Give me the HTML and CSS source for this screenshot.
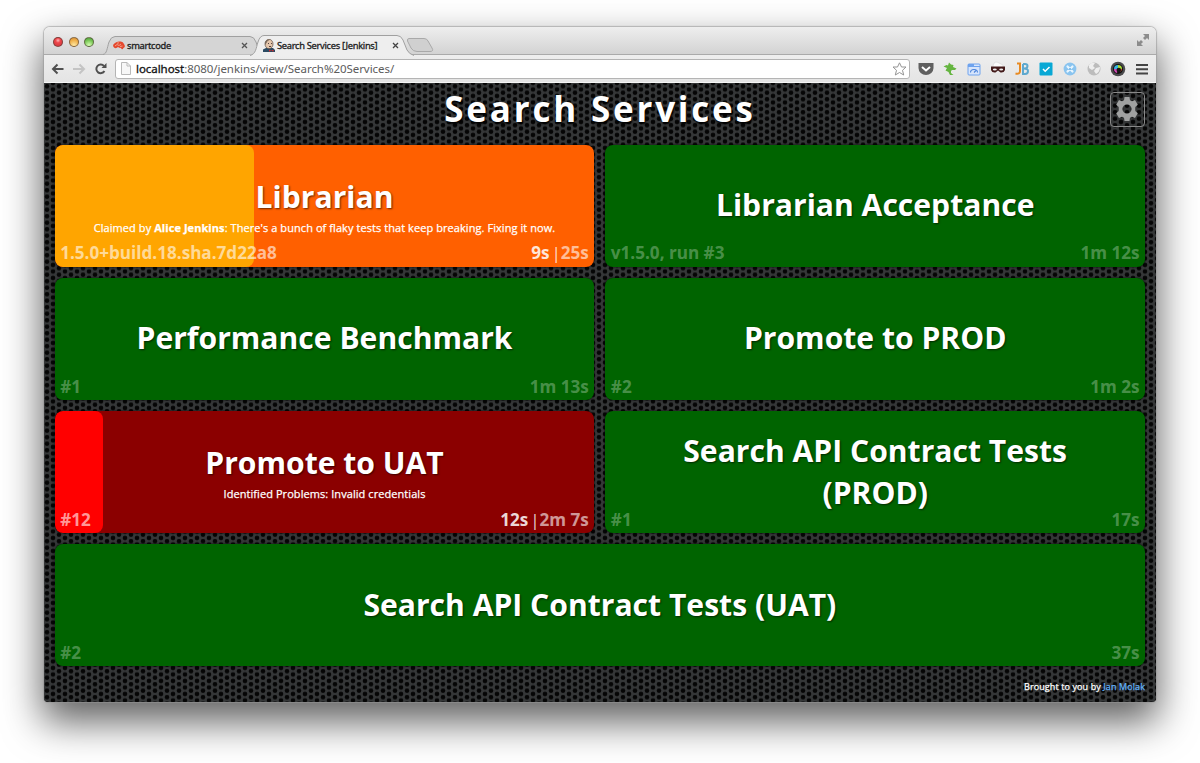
FILE: index.html
```html
<!DOCTYPE html>
<html lang="en">
<head>
<meta charset="utf-8">
<title>Search Services [Jenkins]</title>
<link rel="stylesheet" href="styles.css">
</head>
<body>
<div class="window">
  <div class="chrome">
    <div class="tabstrip">
      <div class="lights"><i class="red"></i><i class="amber"></i><i class="green"></i></div>
      <div class="tabs">
        <svg class="tabshape" width="340" height="22" viewBox="0 0 340 22">
          <path d="M0 20.500C4 20 4 14 6 8Q8 2.500 12 2.500H147Q151 2.500 153 8L156 17Q158 20 162 20.500" fill="#d5d5d5" stroke="#a0a0a0"/>
          <path d="M306 4.500H321Q324 4.500 325 7L329 14Q331 17.500 327 17.500H314Q310 17.500 308 14L304.500 7Q304 4.500 306 4.500Z" fill="#d0d0d0" stroke="#a9a9a9"/>
          <path d="M147 21.500C153 20 153 14 155 8Q157 1.500 161 1.500H294Q298 1.500 300 6L304 16Q306 20 311 21.500" fill="#eee" stroke="#a0a0a0"/>
        </svg>
        <div class="tab first">
          <svg width="12" height="9" viewBox="0 0 12 9"><path d="M0 5Q0 3 2 2Q4 0 7 .500Q10 0 11 3Q13 6 10.500 7Q9 9.500 8 7Q6 7 5 6Q3 8 1 6.500Z" fill="#e5482d"/><path d="M2 5L4 3.500L6 4.500L8 3M4 2.200L6 1.800M7 5.500L9.500 5" stroke="#f7c1ac" stroke-width=".7" fill="none"/></svg>
          <span class="label one">smartcode</span>
          <svg class="close" width="7" height="7"><path d="M1 1L6 6M6 1L1 6" stroke="#555" stroke-width="1.300"/></svg>
        </div>
        <div class="tab second">
          <svg width="12" height="13" viewBox="0 0 12 13"><path d="M0 13V10.500L3 9H10L12 11V13Z" fill="#2b4a62"/><ellipse cx="6" cy="5" rx="4" ry="4.700" fill="#e4c5aa" stroke="#5a4c42" stroke-width=".7"/><path d="M2 6V3Q4 0 7 .700Q4 1.500 3.500 4Z" fill="#7b6a5c"/><path d="M5 4.500H6M8 4.500H9M6 7.500H8" stroke="#544"/><path d="M6 10.500L10.500 12.800V10.500L6 12.800Z" fill="#cc2d2d"/></svg>
          <span class="label two">Search Services [Jenkins]</span>
          <svg class="close" width="7" height="7"><path d="M1 1L6 6M6 1L1 6" stroke="#444" stroke-width="1.300"/></svg>
        </div>
      </div>
      <svg class="expand" width="12" height="12" viewBox="0 0 12 12"><path d="M6 0H12V6L10 4L8 6L6 4L8 2ZM0 6L2 8L4 6L6 8L4 10L6 12H0Z" fill="#8c8c8c"/></svg>
    </div>
    <div class="toolbar">
      <svg class="nav" width="58" height="14" viewBox="0 0 58 14" fill="none" stroke-width="2">
        <path d="M13.500 7H3M7.500 2.500L3 7L7.500 11.500" stroke="#505050"/>
        <path d="M23 7H34M29.500 2.500L34 7L29.500 11.500" stroke="#c4c4c4"/>
        <path d="M54 4.200A4.300 4.300 0 1 0 54.400 9" stroke="#505050"/><path d="M51.500 6H56.500V1Z" fill="#505050"/>
      </svg>
      <div class="address">
        <svg width="10" height="13" viewBox="0 0 10 13"><path d="M.500 .500H6L9.500 4V12.500H.500ZM6 .500V4H9.500" fill="#f7f7f7" stroke="#b9b9b9"/></svg>
        <span class="url"><b>localhost</b>:8080/jenkins/view/Search%20Services/</span>
        <svg class="star" width="15" height="14" viewBox="0 0 15 14"><path d="M7.500 .800L9.500 5H14L10.500 8.300L11.700 13L7.500 10.500L3.300 13L4.500 8.300L1 5H5.500Z" fill="#fff" stroke="#949494"/></svg>
      </div>
      <div class="extensions">
        <svg viewBox="0 0 16 16"><path d="M.500 2H15.500V7A7.500 7 0 0 1 .500 7Z" fill="#606060"/><path d="M4 6L8 9.500L12 6" stroke="#fff" stroke-width="2" fill="none"/></svg>
        <svg viewBox="0 0 16 16"><path d="M1.500 5.500L4.500 4L6 4.500L7 1.500L9 3.500L11.500 4L11 6L14.500 7.500L13 9L10 9L9 10V12L11.500 14H8L6.500 11L3.500 9.500L5 7Z" fill="#65b540"/></svg>
        <svg viewBox="0 0 16 16"><rect x="2" y="3" width="12" height="11" rx="1" fill="#d7e5fc" stroke="#6ea3ee"/><path d="M2 3H8V5H14V6H2Z" fill="#6ea3ee"/><path d="M4.500 11.500A3.500 3 0 0 1 11.500 11.500M8 11.500L10 9.500" stroke="#4b83d9" stroke-width="1.100" fill="none"/></svg>
        <svg viewBox="0 0 16 16"><path d="M3 6Q3 1 7 1L13 4V8H3Z" fill="#fafafa" stroke="#ccc" stroke-width=".5"/><path d="M1 5.500H15V9Q14 12 10.500 11.500L8 9.500L5.500 11.500Q2 12 1 9Z" fill="#421919"/><ellipse cx="4.800" cy="8.500" rx="2" ry="1.100" fill="#eee"/><ellipse cx="11.200" cy="8.500" rx="2" ry="1.100" fill="#eee"/></svg>
        <svg viewBox="0 0 16 16"><path d="M3 2.500H6V10Q6 13.500 1.500 12.500" stroke="#e88a22" stroke-width="2" fill="none"/><path d="M9 3H11Q13.500 3 13.500 5Q13.500 7.500 10 7.500H9M10 7.500Q14 7.500 14 10Q14 13 11 13H9V3" stroke="#5ea9cf" stroke-width="2" fill="none"/></svg>
        <svg viewBox="0 0 16 16"><rect x="1.500" y="1.500" width="13" height="13" rx="1" fill="#08a8d5"/><path d="M5 8L7.200 10.200L11.500 6" stroke="#fff" stroke-width="1.500" fill="none"/></svg>
        <svg viewBox="0 0 16 16"><circle cx="8" cy="8" r="6.400" fill="#8ac4ef"/><path d="M5.500 5.500L10.500 10.500M10.500 5.500L5.500 10.500" stroke="#e8f6ff" stroke-width="2.200" stroke-linecap="round"/><circle cx="8" cy="8" r="1" fill="#65aee5"/></svg>
        <svg viewBox="0 0 16 16"><circle cx="8" cy="8" r="6.500" fill="#bcbcbc"/><path d="M3 4Q5 1 9 2L7 5L9 7L6 9L3 7ZM10 7L14 6Q14 11 10 13L8 10Z" fill="#eee"/></svg>
        <svg viewBox="0 0 16 16"><circle cx="8" cy="8" r="7.300" fill="#4a4a4c"/><circle cx="8" cy="8" r="5" fill="#111"/><path d="M8 4A4 4 0 0 1 12 8H8Z" fill="#a8dd38"/><path d="M4 8A4 4 0 0 1 8 4V8Z" fill="#36b5e4"/><path d="M4 8A4 4 0 0 0 7 12L8 8Z" fill="#d049b5"/><path d="M12 8A4 4 0 0 1 10 11L8 8Z" fill="#e44e36"/><circle cx="8.800" cy="9" r="2.300" fill="#171717"/></svg>
        <svg viewBox="0 0 16 16"><path d="M2 4H14M2 8.300H14M2 12.600H14" stroke="#444" stroke-width="2"/></svg>
      </div>
    </div>
  </div>
  <div class="page">
    <svg class="mesh" width="1112" height="620"><defs><pattern id="mesh" width="12" height="6.500" patternUnits="userSpaceOnUse"><rect width="12" height="7" fill="#353738"/><g fill="#050505"><circle cx="3" cy="3.250" r="2.300"/><circle cx="9" cy="0" r="2.300"/><circle cx="9" cy="6.500" r="2.300"/></g></pattern></defs><rect width="1112" height="620" fill="url(#mesh)"/></svg>
    <header class="heading">
      <h1>Search Services</h1>
      <div class="settings"><svg width="24" height="24" viewBox="0 0 24 24"><path fill-rule="evenodd" d="M9.500 0H14.500L15 3.200L17 4.300L20 3.100L22.800 7.700L20.300 9.900V14L22.800 16.200L20 20.900L17 19.700L15 20.800L14.500 24H9.500L9 20.800L7 19.700L4 20.900L1.200 16.200L3.700 14V9.900L1.200 7.700L4 3.100L7 4.300L9 3.200ZM12 7.500A4.500 4.500 0 1 0 12 16.500A4.500 4.500 0 1 0 12 7.500" fill="#a0a1a1"/></svg></div>
    </header>
    <main class="grid">
      <section class="card claimed">
        <div class="progress amberbar" style="width:37%"></div>
        <div class="body"><h2>Librarian</h2><p>Claimed by <b>Alice Jenkins</b>: There's a bunch of flaky tests that keep breaking. Fixing it now.</p></div>
        <footer class="meta"><span>1.5.0+build.18.sha.7d22a8</span><span class="time"><em>9s</em><i>|</i>25s</span></footer>
      </section>
      <section class="card"><div class="body"><h2>Librarian Acceptance</h2></div><footer class="meta"><span>v1.5.0, run #3</span><span>1m 12s</span></footer></section>
      <section class="card"><div class="body"><h2>Performance Benchmark</h2></div><footer class="meta"><span>#1</span><span>1m 13s</span></footer></section>
      <section class="card"><div class="body"><h2>Promote to PROD</h2></div><footer class="meta"><span>#2</span><span>1m 2s</span></footer></section>
      <section class="card failing">
        <div class="progress redbar" style="width:9%"></div>
        <div class="body"><h2>Promote to UAT</h2><p>Identified Problems: Invalid credentials</p></div>
        <footer class="meta"><span>#12</span><span class="time"><em>12s</em><i>|</i>2m 7s</span></footer>
      </section>
      <section class="card"><div class="body"><h2>Search API Contract Tests<br>(PROD)</h2></div><footer class="meta"><span>#1</span><span>17s</span></footer></section>
      <section class="card wide"><div class="body"><h2>Search API Contract Tests (UAT)</h2></div><footer class="meta"><span>#2</span><span>37s</span></footer></section>
    </main>
    <div class="credit">Brought to you by <a>Jan Molak</a></div>
  </div>
</div>
</body>
</html>
```
FILE: styles.css
```css
* { box-sizing: border-box; }
body { margin: 0; height: 763px; overflow: hidden; background: #fff; padding: 27px 44px 0; font-family: "Open Sans", sans-serif; }
svg { display: block; flex: none; }
.window { width: 1112px; height: 675px; border-radius: 6px 6px 4px 4px; overflow: hidden; display: flex; flex-direction: column; box-shadow: 0 0 1px 1px rgba(150,150,150,.6), 0 18px 38px 2px rgba(0,0,0,.62); }
.chrome { height: 56px; background: linear-gradient(#eee 0, #d2d2d2 28px, #eee 28px, #e4e4e4 100%); border-bottom: 1px solid #f6f6f6; font-family: "Noto Sans", sans-serif; }
.tabstrip { height: 28px; display: flex; align-items: flex-end; border-bottom: 1px solid #aaa; }
.lights { display: flex; gap: 5.500px; padding: 0 0 7px 9px; width: 59px; }
.lights i { width: 10px; height: 10px; border-radius: 50%; border: 1px solid rgba(80,60,50,.65); flex: none; }
.red { background: radial-gradient(circle at 50% 30%, #ffb5b5 0, #ee464b 35%, #c93439 100%); }
.amber { background: radial-gradient(circle at 50% 90%, #ffe9a4 0, #f0b14c 60%, #d18b31 100%); }
.green { background: radial-gradient(circle at 50% 90%, #d8ffb4 0, #78c655 60%, #48963a 100%); }
.tabs { display: grid; width: 340px; height: 22px; margin-bottom: -2px; }
.tabs > * { grid-area: 1 / 1; }
.tab { display: flex; align-items: center; height: 23px; }
.first { margin-left: 10px; width: 135px; }
.second { margin-left: 160px; width: 136px; }
.label { font-size: 9.300px; font-weight: 400; line-height: 14px; color: #181818; white-space: nowrap; margin-left: 2px; -webkit-text-stroke: .3px #222; }
.one { letter-spacing: -.3px; }
.two { letter-spacing: -.3px; }
.close { margin-left: auto; }
.expand { margin: 0 7px 8px auto; }
.toolbar { height: 27px; display: flex; align-items: center; padding: 0 6px; }
.nav { margin-right: 7px; }
.address { width: 798px; height: 20px; border: 1px solid #b4b4b4; border-radius: 3px; background: #fff; display: flex; align-items: center; padding: 0 2px 0 5px; }
.url { margin-left: 5px; font-size: 11.500px; line-height: 16px; color: #5c5c5c; white-space: nowrap; letter-spacing: -.05px; }
.url b { font-weight: 400; color: #111; -webkit-text-stroke: .3px #111; }
.star { margin-left: auto; }
.extensions { display: flex; gap: 8px; margin-left: 8px; }
.extensions svg { width: 16px; height: 16px; }
.page { flex: 1; display: grid; grid-template: 61.500px 521.500px 36px / 1fr; background: #232424; color: #fff; min-height: 0; }
.mesh { grid-area: 1 / 1 / 4 / 2; }
.heading { grid-area: 1 / 1; display: grid; grid-template-columns: 1fr; padding: 0 11px; z-index: 1; }
h1 { grid-area: 1 / 1; margin: 0; text-align: center; font-size: 35px; line-height: 52px; letter-spacing: 2.800px; text-shadow: 1px 2px 2px #000; }
.settings { grid-area: 1 / 1; justify-self: end; margin-top: 9px; width: 35px; height: 35px; border: 1px solid #888; border-radius: 4px; display: grid; place-items: center; }
.settings svg { margin: -1px 0 0 -1px; }
.grid { grid-area: 2 / 1; z-index: 1; display: grid; grid-template-columns: 1fr 1fr; grid-template-rows: repeat(4, 122px); gap: 11.300px 11px; padding: 0 11px 0 10.700px; }
.card { display: grid; grid-template: 1fr / 1fr; background: #006400; border-radius: 8px; overflow: hidden; box-shadow: 0 0 2px #000; }
.wide { grid-column: span 2; }
.claimed { background: #ff6000; }
.failing { background: #8b0000; }
.progress { grid-area: 1 / 1; border-radius: 8px; }
.amberbar { background: #ffa500; }
.redbar { background: #f00; }
.body { grid-area: 1 / 1; z-index: 1; text-align: center; display: flex; flex-direction: column; justify-content: center; padding-bottom: 1px; }
h2 { margin: 0; font-size: 30.100px; line-height: 42px; text-shadow: 1px 1px 2px rgba(0,0,0,.6); white-space: nowrap; }
p { margin: 2px 0 -1px; font-size: 11px; line-height: 16px; letter-spacing: .07px; white-space: nowrap; -webkit-text-stroke: .25px #fff; }
.meta { grid-area: 1 / 1; z-index: 2; align-self: end; display: flex; justify-content: space-between; padding: 0 5.500px 1.300px; font-size: 17.100px; font-weight: 700; line-height: 24px; color: rgba(255,255,255,.3); }
.claimed .meta, .failing .meta { color: rgba(255,255,255,.6); }
.time em { font-style: normal; color: rgba(255,255,255,.85); }
.time i { font-style: normal; font-weight: 400; margin: 0 0 0 2px; color: rgba(255,255,255,.8); }
.credit { grid-area: 3 / 1; z-index: 1; text-align: right; padding: 14px 11px 0; font-size: 9px; line-height: 14px; letter-spacing: .1px; -webkit-text-stroke: .25px currentColor; }
.credit a { color: #61b3fa; }
```
